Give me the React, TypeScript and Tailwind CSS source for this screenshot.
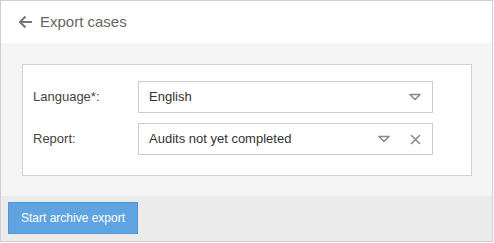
import React from "react";

const font = { fontFamily: '"Liberation Sans", Arial, sans-serif' };

const Caret = () => (
  <svg width="12" height="8" viewBox="0 0 12 8" className="shrink-0">
    <path d="M1 1.5 H11 L6 6.5 Z" fill="none" stroke="#8a8a8a" strokeWidth="1.6" strokeLinejoin="round" />
  </svg>
);

const Clear = () => (
  <svg width="11" height="11" viewBox="0 0 11 11" className="shrink-0">
    <path d="M1 1 L10 10 M10 1 L1 10" stroke="#8a8a8a" strokeWidth="1.5" />
  </svg>
);

interface SelectProps {
  value: string;
  clearable?: boolean;
}

const Select = ({ value, clearable }: SelectProps) => (
  <div className="flex items-center h-[32px] w-[295px] border border-[#cccccc] bg-white pl-[10px] pr-[11px]">
    <span className="grow text-[13px] text-[#333333]">{value}</span>
    <Caret />
    {clearable && (
      <span className="ml-[20px] flex">
        <Clear />
      </span>
    )}
  </div>
);

const Row = ({ label, children }: { label: string; children: React.ReactNode }) => (
  <div className="flex items-center">
    <div className="w-[105px] text-[13px] text-[#444444]">{label}</div>
    {children}
  </div>
);

export default function App() {
  return (
    <div style={font} className="w-[493px] h-[242px] border border-[#cfcfcf] flex flex-col">
      <div className="h-[42px] bg-white flex items-center pl-[17px]">
        <svg width="15" height="14" viewBox="0 0 15 14">
          <path d="M14 7 H2 M7.5 1.5 L2 7 L7.5 12.5" fill="none" stroke="#777777" strokeWidth="2" />
        </svg>
        <span className="ml-[7px] text-[15px] text-[#666666]">Export cases</span>
      </div>
      <div className="h-[153px] bg-[#f5f5f5] pl-[21px] pt-[21px]">
        <div className="w-[450px] h-[112px] border border-[#d2d2d2] bg-white pl-[10px] pt-[16px] flex flex-col gap-[10px]">
          <Row label="Language*:">
            <Select value="English" />
          </Row>
          <Row label="Report:">
            <Select value="Audits not yet completed" clearable />
          </Row>
        </div>
      </div>
      <div className="grow bg-[#ebebeb] pl-[7px] pt-[6px]">
        <button className="h-[32px] w-[130px] bg-[#5fa3e0] border border-[#5095d6] text-white text-[12px]">
          Start archive export
        </button>
      </div>
    </div>
  );
}
